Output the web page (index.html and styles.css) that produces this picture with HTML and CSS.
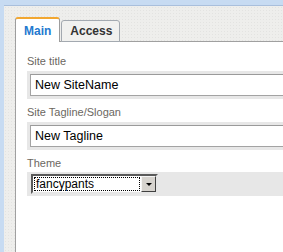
FILE: index.html
```html
<!DOCTYPE html>
<html>
<head>
<meta charset="utf-8">
<link rel="stylesheet" href="styles.css">
</head>
<body>
<div class="frame">
  <div class="tabs">
    <div class="tab tab-active">Main</div>
    <div class="tab">Access</div>
  </div>
  <div class="panel">
    <div class="field">
      <div class="label">Site title</div>
      <div class="well"><div class="input">New SiteName</div></div>
    </div>
    <div class="field">
      <div class="label">Site Tagline/Slogan</div>
      <div class="well"><div class="input">New Tagline</div></div>
    </div>
    <div class="field">
      <div class="label">Theme</div>
      <div class="well well-select">
        <div class="select">
          <div class="select-value"><span class="select-focus">fancypants</span></div>
          <div class="select-button"><span class="arrow"></span></div>
        </div>
      </div>
    </div>
  </div>
</div>
</body>
</html>
```

FILE: styles.css
```css
html, body {
  margin: 0;
  height: 100%;
  overflow: hidden;
}
body {
  background: #c7dbf2;
  font-family: "Liberation Sans", Arial, sans-serif;
}
.frame {
  margin: 5px 0 0 4px;
  height: calc(100% - 5px);
  box-sizing: border-box;
  border-top: 1px solid #a9bfdc;
  background-color: #eeeeec;
  background-image: radial-gradient(circle, #e3e3e1 0.8px, transparent 1px);
  background-size: 3px 3px;
  padding: 11px 0 0 11px;
  display: flex;
  flex-direction: column;
}
.tabs {
  display: flex;
  align-items: flex-end;
  gap: 1px;
  position: relative;
  z-index: 1;
  margin-bottom: -1px;
}
.tab {
  font-size: 12px;
  font-weight: bold;
  line-height: 14px;
  color: #333;
  background: #f1f1ef;
  border: 1px solid #a3a9b0;
  border-radius: 3px 3px 0 0;
  padding: 3px 7px 3px 8px;
}
.tab-active {
  color: #2479cf;
  background: #fff;
  border-color: #9d9d9d;
  border-top: 2px solid #f2a731;
  border-bottom: none;
  padding: 5px 8px 4px 8px;
}
.panel {
  flex: 1;
  background: #fff;
  border-top: 1px solid #a0a0a0;
  border-left: 1px solid #a0a0a0;
  padding: 12px 0 0 11px;
  overflow: hidden;
}
.field {
  margin-bottom: 6px;
}
.label {
  font-size: 11px;
  line-height: 14px;
  color: #6b675f;
  margin-bottom: 3px;
}
.well {
  background: #e7e7e7;
  padding: 3px;
  width: 320px;
}
.input {
  border: 1px solid #a3a3a3;
  border-top-color: #9a9a9a;
  background: #fff;
  height: 20px;
  line-height: 20px;
  font-size: 12.5px;
  color: #000;
  padding-left: 4px;
  white-space: nowrap;
}
.well-select {
  padding: 2px 3px 2px 4px;
  margin-top: -1px;
}
.select {
  width: 127px;
  height: 20px;
  box-sizing: border-box;
  border: 2px solid;
  border-color: #5a5a5a #e6e6e6 #e6e6e6 #5a5a5a;
  background: #fff;
  display: flex;
}
.select-value {
  flex: 1;
  padding: 1px;
  display: flex;
}
.select-focus {
  flex: 1;
  outline: 1px dotted #000;
  outline-offset: -1px;
  font-size: 12px;
  line-height: 14px;
  padding-left: 2px;
  color: #000;
}
.select-button {
  width: 15px;
  box-sizing: border-box;
  background: #d6d3ce;
  border: 1px solid;
  border-color: #f4f4f4 #404040 #404040 #f4f4f4;
  display: flex;
  align-items: center;
  justify-content: center;
}
.arrow {
  width: 0;
  height: 0;
  border-left: 3px solid transparent;
  border-right: 3px solid transparent;
  border-top: 3px solid #000;
  margin-top: 1px;
}
```
